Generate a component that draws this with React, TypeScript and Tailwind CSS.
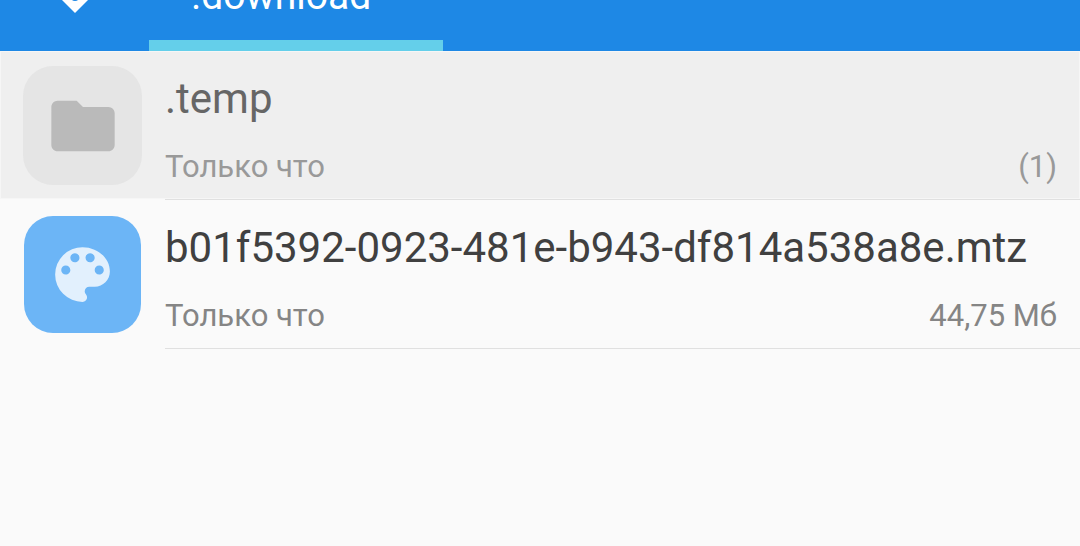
import React from "react";
import { MdFolder } from "react-icons/md";

interface FileItem {
  name: string;
  modified: string;
  info: string;
  selected: boolean;
  icon: React.ReactNode;
}

function PaletteIcon({ className }: { className?: string }) {
  return (
    <svg viewBox="0 0 24 24" className={className} fill="currentColor">
      <path d="M12 3a9 9 0 0 0 0 18c.83 0 1.5-.67 1.5-1.5 0-.39-.15-.74-.39-1.01-.23-.26-.38-.61-.38-.99 0-.83.67-1.5 1.5-1.5H16c2.76 0 5-2.24 5-5 0-4.42-4.03-8-9-8zm-5.5 9C5.67 12 5 11.33 5 10.500S5.670 9 6.500 9 8 9.670 8 10.500 7.330 12 6.500 12zm3-4C8.670 8 8 7.330 8 6.500S8.670 5 9.500 5s1.500.670 1.500 1.500S10.330 8 9.500 8zm5 0c-.83 0-1.500-.670-1.500-1.500S13.670 5 14.500 5s1.500.670 1.500 1.500S15.330 8 14.500 8zm3 4c-.83 0-1.500-.670-1.500-1.500S16.670 9 17.500 9s1.500.670 1.500 1.500-.670 1.500-1.500 1.500z" />
    </svg>
  );
}

const files: FileItem[] = [
  {
    name: ".temp",
    modified: "Только что",
    info: "(1)",
    selected: true,
    icon: <MdFolder className="h-[76px] w-[76px] text-[#bababa]" />,
  },
  {
    name: "b01f5392-0923-481e-b943-df814a538a8e.mtz",
    modified: "Только что",
    info: "44,75 Мб",
    selected: false,
    icon: <PaletteIcon className="h-[73px] w-[73px] text-[#e2f0fd]" />,
  },
];

function Header() {
  return (
    <header className="flex h-[51px] items-end overflow-hidden bg-[#1e88e5] text-white">
      <button
        aria-label="Storage"
        className="flex w-[149px] shrink-0 justify-center pb-[37px]"
      >
        <svg viewBox="0 0 60 60" className="h-[60px] w-[60px]" fill="none">
          <path d="M30 1L59 30 30 59 1 30z" fill="currentColor" />
          <circle cx="30" cy="43" r="4" fill="#1e88e5" />
        </svg>
      </button>
      <nav className="flex">
        <a
          href="#download"
          aria-current="page"
          className="w-[294px] border-b-[11px] border-[#64cfea] pb-5 pl-[42px] text-[39px] leading-[48px]"
        >
          .download
        </a>
      </nav>
    </header>
  );
}

function FileRow({ name, modified, info, selected, icon }: FileItem) {
  return (
    <li>
      <a
        href="#file"
        className={`flex gap-6 border pt-[15px] pr-[22px] pb-3.5 pl-[23px] ${
          selected ? "border-[#f6f6f6] bg-[#efefef]" : "border-transparent"
        }`}
      >
        <div
          className={`flex h-[117px] w-[117px] shrink-0 items-center justify-center rounded-[29px] ${
            selected ? "bg-[#e5e5e5] ring-1 ring-[#e5e5e5]" : "bg-[#6cb5f6]"
          }`}
        >
          {icon}
        </div>
        <div className="flex min-w-0 flex-1 flex-col justify-between">
          <p
            className={`truncate text-[42px] leading-[64px] ${
              selected ? "text-[#666666]" : "text-[#404040]"
            }`}
          >
            {name}
          </p>
          <div
            className={`flex justify-between text-[31px] leading-[34px] ${
              selected ? "text-[#999999]" : "text-[#858585]"
            }`}
          >
            <span>{modified}</span>
            <span>{info}</span>
          </div>
        </div>
      </a>
      <div className="ml-[165px] h-px bg-[#e0e0e0]" />
    </li>
  );
}

export default function App() {
  return (
    <div className="min-h-screen bg-[#fafafa] font-['Roboto','Noto_Sans',sans-serif]">
      <Header />
      <main>
        <ul>
          {files.map((file) => (
            <FileRow key={file.name} {...file} />
          ))}
        </ul>
      </main>
    </div>
  );
}
